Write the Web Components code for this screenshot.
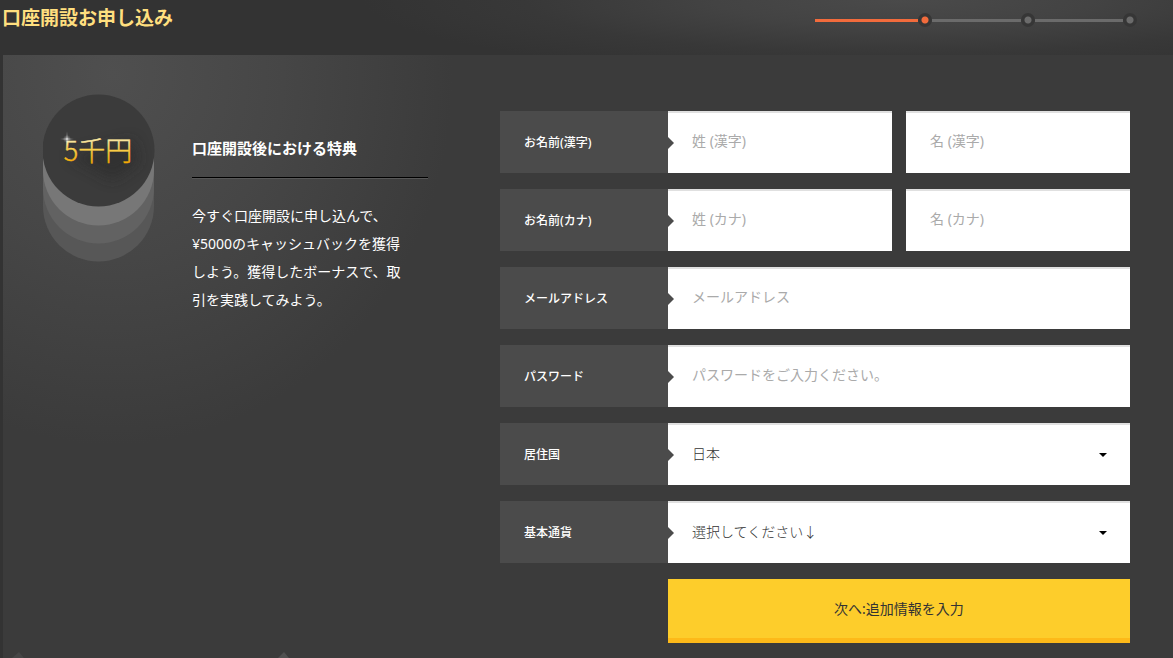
<!DOCTYPE html>
<html lang="ja">
<head>
<meta charset="utf-8">
<meta name="viewport" content="width=device-width, initial-scale=1">
<title>口座開設お申し込み</title>
<style>
  body {
    margin: 0;
    background: #333;
    color: #fff;
    font-family: "Noto Sans", "Noto Sans CJK JP", sans-serif;
    font-size: 14px;
  }
</style>
</head>
<body>
<signup-page></signup-page>

<script>
(function() {

  // Create a template from a string of markup
  function makeTemplate(html) {
    const template = document.createElement('template');
    template.innerHTML = html;
    return template;
  }

  // Base class, clones the template into an open shadow root
  class BaseElement extends HTMLElement {
    constructor() {
      super();
      this.attachShadow({mode: 'open'});
      this.shadowRoot.appendChild(this.constructor.template.content.cloneNode(true));
    }
  }

  // -----------------------------------------------------
  // Step progress in the page header
  class StepProgress extends BaseElement {
    static get template() {
      return makeTemplate(`
        <style>
          :host { display: block; width: 322px; }
          ol {
            display: grid;
            grid-template-columns: 117px 1fr 1fr;
            margin: 0;
            padding: 0;
            list-style: none;
          }
          li { display: flex; align-items: center; color: #6b6b6b; }
          li.done { color: #f26b3c; }
          .bar { flex: 1; height: 3px; background: currentColor; }
          .dot {
            width: 14px;
            height: 14px;
            border-radius: 50%;
            background: radial-gradient(circle, currentColor 3px, #363636 4px);
          }
        </style>
        <ol></ol>
      `);
    }

    // Build one item for each step
    connectedCallback() {
      const total = Number(this.getAttribute('steps'));
      const current = Number(this.getAttribute('current'));
      const list = this.shadowRoot.querySelector('ol');
      list.innerHTML = '';
      for (let i = 1; i <= total; i++) {
        const item = document.createElement('li');
        if (i <= current)
          item.className = 'done';
        if (i === current)
          item.setAttribute('aria-current', 'step');
        item.innerHTML = '<span class="bar"></span><span class="dot"></span>';
        list.appendChild(item);
      }
    }
  }

  // -----------------------------------------------------
  // Header with the title and the progress
  class PageHeader extends BaseElement {
    static get template() {
      return makeTemplate(`
        <style>
          :host {
            display: flex;
            justify-content: space-between;
            align-items: flex-start;
            box-sizing: border-box;
            height: 55px;
            padding: 4px 36px 0 2px;
            background: radial-gradient(540px 76px at 77% 0, #4a4a4a, #434343 35%, #383838 70%, #333 100%);
          }
          h1 {
            margin: 0;
            color: #ffdf7f;
            font-size: 19px;
            line-height: 28px;
            font-weight: bold;
          }
          ::slotted(step-progress) { margin-top: 9px; }
        </style>
        <h1><slot></slot></h1>
        <slot name="progress"></slot>
      `);
    }
  }

  // -----------------------------------------------------
  // Round badge with three fading layers under it
  class BonusBadge extends BaseElement {
    static get template() {
      return makeTemplate(`
        <style>
          :host { display: block; width: 112px; }
          svg { display: block; }
          text {
            font-family: "Noto Sans CJK JP", sans-serif;
            font-size: 27px;
            font-weight: 300;
            stroke: url(#gold);
            stroke-width: .4px;
          }
        </style>
        <svg width="112" height="168" viewBox="0 0 112 168" role="img">
          <defs>
            <linearGradient id="gold" x1="0" y1="0" x2="0" y2="1">
              <stop offset=".3" stop-color="#f7e49a"/>
              <stop offset=".5" stop-color="#f8cf4c"/>
              <stop offset=".85" stop-color="#f5a800"/>
            </linearGradient>
            <radialGradient id="spark">
              <stop offset="0" stop-color="#fff" stop-opacity=".8"/>
              <stop offset=".3" stop-color="#fff" stop-opacity=".35"/>
              <stop offset="1" stop-color="#fff" stop-opacity="0"/>
            </radialGradient>
            <filter id="soft" x="-50%" y="-50%" width="200%" height="200%">
              <feGaussianBlur stdDeviation="7"/>
            </filter>
            <clipPath id="disc"><circle cx="55.5" cy="56.5" r="56"/></clipPath>
          </defs>
          <path d="M0 56H111V112A55.500 55.500 0 0 1 0 112Z" fill="#575757"/>
          <path d="M0 56H111V94A55.500 55.500 0 0 1 0 94Z" fill="#626262"/>
          <path d="M0 56H111V76A55.500 55.500 0 0 1 0 76Z" fill="#777"/>
          <circle cx="55.500" cy="56.500" r="56" fill="#3b3b3b"/>
          <g clip-path="url(#disc)">
            <path d="M26 62L90 46L96 68L70 86Z" fill="#2a2a2a" opacity=".6" filter="url(#soft)"/>
          </g>
          <text x="55" y="67" text-anchor="middle" fill="url(#gold)"></text>
          <ellipse cx="24" cy="45" rx="8" ry="1" fill="url(#spark)"/>
          <ellipse cx="24" cy="45" rx="1" ry="9" fill="url(#spark)"/>
          <circle cx="24" cy="45" r="4" fill="url(#spark)"/>
        </svg>
      `);
    }

    connectedCallback() {
      this.shadowRoot.querySelector('text').textContent = this.getAttribute('amount');
    }
  }

  // -----------------------------------------------------
  // Promo column: badge, heading, text
  class BonusPromo extends BaseElement {
    static get template() {
      return makeTemplate(`
        <style>
          :host { display: flex; flex-direction: column; }
          .promo { display: flex; gap: 37px; padding-top: 39px; }
          .copy { flex: 1; padding-top: 42px; }
          h2 {
            margin: 0 0 24px;
            padding-bottom: 17px;
            border-bottom: 1px solid #000;
            box-shadow: 0 1px #575757;
            font-size: 15px;
            line-height: 24px;
            font-weight: bold;
          }
          p { max-width: 212px; margin: 0; line-height: 28px; }
          .peaks { display: block; margin-top: auto; }
        </style>
        <div class="promo">
          <slot name="badge"></slot>
          <div class="copy">
            <h2><slot name="heading"></slot></h2>
            <p><slot></slot></p>
          </div>
        </div>
        <svg class="peaks" width="300" height="6" viewBox="0 0 300 6" overflow="visible" aria-hidden="true">
          <path d="M-31 6L-24 0L-19 6Z" fill="#464646"/>
          <path d="M235 6L241 0L246 6Z" fill="#505050"/>
        </svg>
      `);
    }
  }

  // -----------------------------------------------------
  // One row of the form: label on the left, fields on the right
  class FormRow extends BaseElement {
    static get template() {
      return makeTemplate(`
        <style>
          :host { display: flex; }
          .label {
            display: flex;
            flex: none;
            align-items: center;
            box-sizing: border-box;
            width: 168px;
            height: 62px;
            padding-left: 24px;
            background: #4b4b4b;
            font-size: 12px;
            font-weight: 500;
          }
          .fields { position: relative; display: flex; flex: 1; gap: 14px; min-width: 0; }
          /* pointer from the label onto the field */
          .fields::before {
            content: "";
            position: absolute;
            left: 0;
            top: 26px;
            border: 6px solid transparent;
            border-left-color: #4b4b4b;
            border-right-width: 0;
          }
          :host([select]) .fields::after {
            content: "";
            position: absolute;
            right: 23px;
            top: 30px;
            border: 4px solid transparent;
            border-top-color: #000;
            border-bottom-width: 0;
            pointer-events: none;
          }
        </style>
        <div class="label"><slot name="label"></slot></div>
        <div class="fields"><slot></slot></div>
      `);
    }
  }

  // -----------------------------------------------------
  // The account form
  class AccountForm extends BaseElement {
    static get template() {
      return makeTemplate(`
        <style>
          :host { display: block; padding-top: 56px; }
          form { display: flex; flex-direction: column; gap: 16px; }
          input, select {
            flex: 1;
            box-sizing: border-box;
            min-width: 0;
            height: 62px;
            margin: 0;
            padding: 0 24px 4px;
            border: 0;
            border-top: 2px solid #e0e0e0;
            border-radius: 0;
            background: #fff;
            color: #333;
            font: inherit;
            font-size: 14px;
            appearance: none;
          }
          input { padding-bottom: 6px; }
          select { font-family: "Noto Sans CJK JP", sans-serif; font-weight: 300; }
          input::placeholder { color: #aaa; opacity: 1; }
          button {
            height: 64px;
            margin-left: 168px;
            padding: 0 0 2px;
            border: 0;
            border-bottom: 5px solid #fdb919;
            background: #fdcd2b;
            color: #333;
            font: inherit;
            font-size: 14px;
            cursor: pointer;
          }
        </style>
        <form>
          <form-row>
            <label slot="label" for="last-kanji">お名前(漢字)</label>
            <input id="last-kanji" type="text" placeholder="姓 (漢字)">
            <input type="text" placeholder="名 (漢字)" aria-label="名 (漢字)">
          </form-row>
          <form-row>
            <label slot="label" for="last-kana">お名前(カナ)</label>
            <input id="last-kana" type="text" placeholder="姓 (カナ)">
            <input type="text" placeholder="名 (カナ)" aria-label="名 (カナ)">
          </form-row>
          <form-row>
            <label slot="label" for="email">メールアドレス</label>
            <input id="email" type="email" placeholder="メールアドレス">
          </form-row>
          <form-row>
            <label slot="label" for="password">パスワード</label>
            <input id="password" type="password" placeholder="パスワードをご入力ください。">
          </form-row>
          <form-row select>
            <label slot="label" for="country">居住国</label>
            <select id="country"><option>日本</option></select>
          </form-row>
          <form-row select>
            <label slot="label" for="currency">基本通貨</label>
            <select id="currency"><option>選択してください↓</option></select>
          </form-row>
          <button type="submit">次へ:追加情報を入力</button>
        </form>
      `);
    }

    connectedCallback() {
      this.shadowRoot.querySelector('form').addEventListener('submit', event => {
        event.preventDefault();
      });
    }
  }

  // -----------------------------------------------------
  // The whole page
  class SignupPage extends BaseElement {
    static get template() {
      return makeTemplate(`
        <style>
          :host { display: flex; flex-direction: column; min-height: 100vh; }
          main {
            flex: 1;
            display: grid;
            grid-template-columns: 385px minmax(0, 1fr);
            column-gap: 72px;
            margin-left: 3px;
            padding: 0 43px 0 40px;
            background: radial-gradient(340px 370px at 110px 20px, #4f4f4f, #464646 50%, #3b3b3b 100%) #3b3b3b;
          }
        </style>
        <page-header>
          口座開設お申し込み
          <step-progress slot="progress" steps="3" current="1"></step-progress>
        </page-header>
        <main>
          <bonus-promo>
            <bonus-badge slot="badge" amount="5千円"></bonus-badge>
            <span slot="heading">口座開設後における特典</span>
            今すぐ口座開設に申し込んで、¥5000のキャッシュバックを獲得しよう。獲得したボーナスで、取引を実践してみよう。
          </bonus-promo>
          <account-form></account-form>
        </main>
      `);
    }
  }

  // Define the custom elements
  customElements.define('step-progress', StepProgress);
  customElements.define('page-header', PageHeader);
  customElements.define('bonus-badge', BonusBadge);
  customElements.define('bonus-promo', BonusPromo);
  customElements.define('form-row', FormRow);
  customElements.define('account-form', AccountForm);
  customElements.define('signup-page', SignupPage);
})();
</script>
</body>
</html>
